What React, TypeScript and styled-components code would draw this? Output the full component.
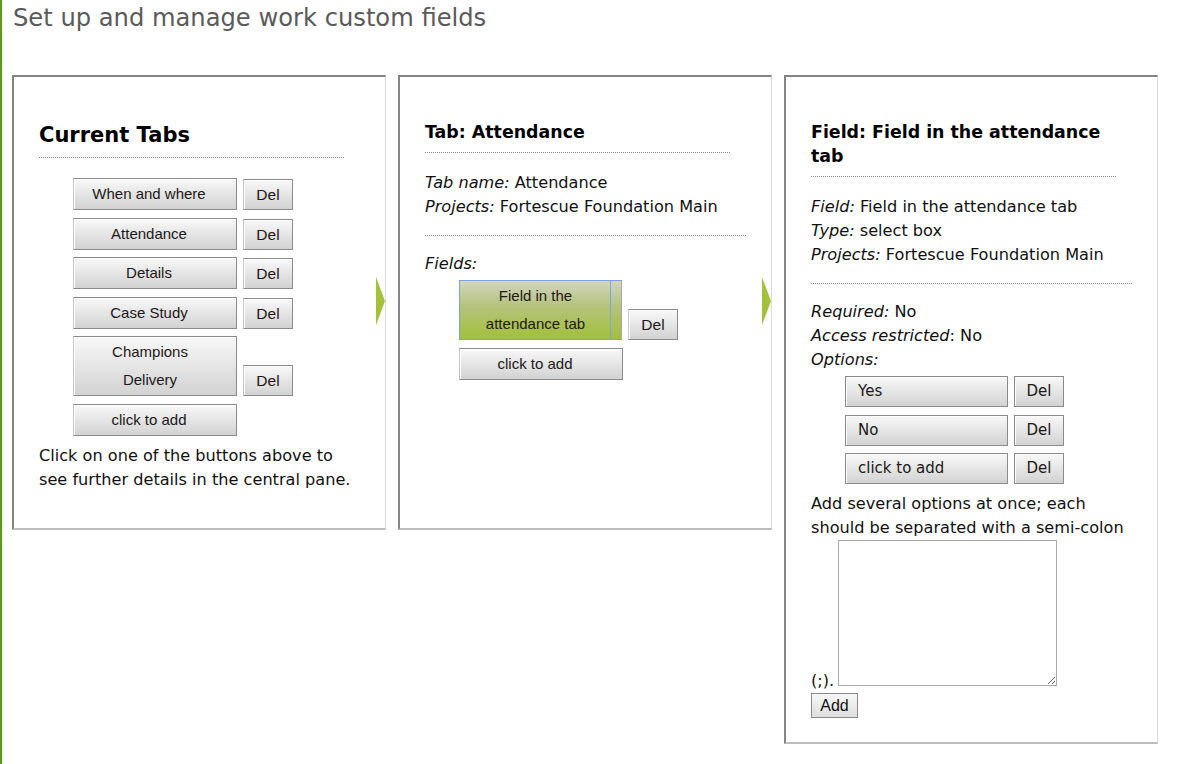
import React from 'react';
import styled, {createGlobalStyle} from "styled-components";

const GlobalStyle = createGlobalStyle`
  html, body {
    margin: 0;
    padding: 0;
    background: #fff;
  }
  body {
    font-family: "DejaVu Sans", Verdana, sans-serif;
    color: #111;
  }
`

const tabs = ['When and where', 'Attendance', 'Details', 'Case Study', 'Champions Delivery'];
const options = ['Yes', 'No', 'click to add'];

export default function App() {
    return (
        <Page>
            <GlobalStyle/>
            <Title>Set up and manage work custom fields</Title>
            <Columns>
                <Panel $short>
                    <Heading $big>Current Tabs</Heading>
                    <ButtonList>
                        {tabs.map(t => (
                            <Row key={t}>
                                <TabButton $wrap={t.length > 16}>{t}</TabButton>
                                <DelButton>Del</DelButton>
                            </Row>
                        ))}
                        <Row>
                            <TabButton>click to add</TabButton>
                        </Row>
                    </ButtonList>
                    <Lines style={{marginTop: 8}}>
                        Click on one of the buttons above to see further details in the central pane.
                    </Lines>
                    <Arrow/>
                </Panel>

                <Panel $short>
                    <Heading>Tab: Attendance</Heading>
                    <Lines>
                        <div><em>Tab name:</em> Attendance</div>
                        <div><em>Projects:</em> Fortescue Foundation Main</div>
                    </Lines>
                    <Divider/>
                    <Lines style={{marginTop: 0}}><em>Fields:</em></Lines>
                    <ButtonList style={{marginTop: 4}}>
                        <Row>
                            <FieldButton>Field in the attendance tab</FieldButton>
                            <DelButton>Del</DelButton>
                        </Row>
                        <Row>
                            <TabButton>click to add</TabButton>
                        </Row>
                    </ButtonList>
                    <Arrow/>
                </Panel>

                <Panel>
                    <Heading>Field: Field in the attendance tab</Heading>
                    <Lines>
                        <div><em>Field:</em> Field in the attendance tab</div>
                        <div><em>Type:</em> select box</div>
                        <div><em>Projects:</em> Fortescue Foundation Main</div>
                    </Lines>
                    <Divider/>
                    <Lines style={{marginTop: 0}}>
                        <div><em>Required:</em> No</div>
                        <div><em>Access restricted</em>: No</div>
                        <div><em>Options:</em></div>
                    </Lines>
                    <ButtonList style={{marginTop: 4}}>
                        {options.map(o => (
                            <Row key={o}>
                                <OptionButton>{o}</OptionButton>
                                <OptionDel>Del</OptionDel>
                            </Row>
                        ))}
                    </ButtonList>
                    <Lines style={{marginTop: 8}}>
                        Add several options at once; each should be separated with a semi-colon
                    </Lines>
                    <AreaRow>
                        <span>(;).</span>
                        <OptionsArea/>
                    </AreaRow>
                    <AddButton>Add</AddButton>
                </Panel>
            </Columns>
        </Page>
    );
}

const Page = styled.div`
  min-height: 764px;
  border-left: 2px solid #5b9a1d;
  box-sizing: border-box;
`

const Title = styled.h1`
  margin: 0;
  padding: 4px 0 0 11px;
  font-size: 24.2px;
  line-height: 28px;
  font-weight: 400;
  color: #5a5a5a;
`

const Columns = styled.div`
  display: flex;
  align-items: flex-start;
  gap: 12px;
  margin: 43px 0 0 10px;
`

const Panel = styled.section<{ $short?: boolean }>`
  position: relative;
  width: 374px;
  box-sizing: border-box;
  min-height: ${p => p.$short ? '455px' : '0'};
  padding: 43px 25px 24px;
  border-top: 2px solid #858585;
  border-left: 2px solid #858585;
  border-right: 1px solid #dadada;
  border-bottom: 2px solid #bdbdbd;
  font-size: 16.15px;
  line-height: 24px;
`

const Heading = styled.h2<{ $big?: boolean }>`
  width: 95%;
  margin: 0;
  padding-bottom: ${p => p.$big ? '7px' : '8px'};
  border-bottom: 1px dotted #8a8a8a;
  font-size: ${p => p.$big ? '21px' : '17.4px'};
  line-height: ${p => p.$big ? '30px' : '24px'};
  font-weight: 700;
  color: #000;
`

const Lines = styled.div`
  margin-top: 18px;

  em {
    font-style: italic;
  }
`

const Divider = styled.hr`
  margin: 16px 0;
  border: 0;
  border-top: 1px dotted #8a8a8a;
`

const ButtonList = styled.div`
  display: flex;
  flex-direction: column;
  gap: 7.5px;
  margin: 20px 0 0 34px;
`

const Row = styled.div`
  display: flex;
  align-items: flex-end;
  gap: 6px;
`

const GreyButton = styled.button`
  box-sizing: border-box;
  margin: 0;
  border: 1px solid #8a8a8a;
  border-left-color: #c6c6c6;
  background: linear-gradient(#f8f8f8, #d2d2d2);
  box-shadow: inset 1px 1px 0 #fff;
  color: #221818;
  cursor: pointer;
`

const TabButton = styled(GreyButton)<{ $wrap?: boolean }>`
  width: 164px;
  padding: 1px ${p => p.$wrap ? '46px' : '14px'} 1px ${p => p.$wrap ? '36px' : '2px'};
  font-family: "Liberation Sans", Arial, sans-serif;
  font-size: 15px;
  line-height: 28px;
  text-align: center;
`

const DelButton = styled(GreyButton)`
  width: 50px;
  padding: 1px 0;
  font-family: "Liberation Sans", Arial, sans-serif;
  font-size: 15.5px;
  line-height: 27px;
`

const FieldButton = styled(GreyButton)`
  position: relative;
  width: 163px;
  padding: 1px 14px 1px 4px;
  border: 1px solid #7ba3de;
  border-right-color: #a8a8a8;
  background: linear-gradient(#d3d5c0 0%, #b4c27a 45%, #a2c03a 100%);
  box-shadow: none;
  font-family: "Liberation Sans", Arial, sans-serif;
  font-size: 15px;
  line-height: 28px;

  &:after {
    content: "";
    position: absolute;
    top: -1px;
    bottom: -1px;
    right: 10px;
    width: 1px;
    background: #7ba3de;
  }
`

const OptionButton = styled(GreyButton)`
  width: 163px;
  padding: 1px 12px;
  font-family: "DejaVu Sans", Verdana, sans-serif;
  font-size: 15px;
  line-height: 27px;
  text-align: left;
  border-left-color: #8a8a8a;
`

const OptionDel = styled(OptionButton)`
  width: 50px;
  padding: 1px 0;
  text-align: center;
`

const AreaRow = styled.div`
  display: flex;
  align-items: flex-end;
  gap: 4px;
  line-height: 16px;

  span {
    margin-bottom: -3px;
  }
`

const OptionsArea = styled.textarea`
  width: 219px;
  height: 146px;
  box-sizing: border-box;
  margin: 0;
  border: 1px solid #a9a9a9;
  font-family: "DejaVu Sans", Verdana, sans-serif;
`

const AddButton = styled.button`
  display: block;
  margin-top: 7px;
  height: 25px;
  width: 47px;
  padding: 0;
  border: 1px solid #8a8a8a;
  background: linear-gradient(#f7f7f7, #dedede);
  font-family: "Liberation Sans", Arial, sans-serif;
  font-size: 16px;
  color: #111;
`

const Arrow = styled.span`
  position: absolute;
  top: 200px;
  right: 0;
  width: 0;
  height: 0;
  border-top: 24px solid transparent;
  border-bottom: 24px solid transparent;
  border-left: 9px solid #a3c13a;
`
